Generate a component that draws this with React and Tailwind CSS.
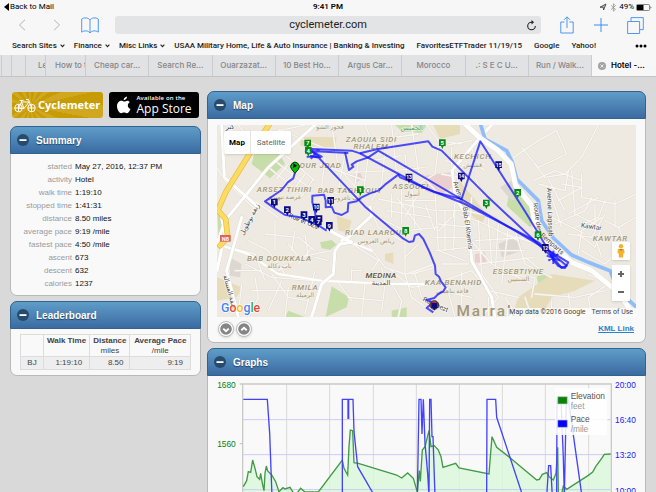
import React from "react";

function SafariChrome() {
  const tabs = ["Cheap car...", "Search Re...", "Ouarzazat...", "10 Best Ho...", "Argus Car...", "Morocco", ".: S E C U...", "Run / Walk..."];
  const divider = "shrink-0 border-r border-[#cbccce]";
  return (
    <header className="bg-[#f7f7f7] font-['Inter','Roboto',sans-serif] text-[8px] text-[#222]">
      <div className="grid h-[14px] grid-cols-3 items-center px-1 font-['Roboto',sans-serif] leading-[12px] text-black">
        <button className="flex items-center gap-[1px] text-left">
          <svg width="5" height="8" viewBox="0 0 5 8"><path d="M5 0v8L0 4z" /></svg>
          Back to Mail
        </button>
        <div className="text-center font-semibold">9:41 PM</div>
        <div className="flex items-center justify-end gap-[2px]">
          <svg width="9" height="8" viewBox="0 0 9 8"><path d="M1 4.200 7 1 4.600 7 4.200 4.300z" fill="#333" fillOpacity=".3" stroke="#333" strokeWidth=".8" /></svg>
          <svg width="7" height="9" viewBox="0 0 7 9"><path d="m1 2.400 4.500 4L3.400 8.200V.8l2.100 1.800-4.500 4" fill="none" stroke="#888" strokeWidth=".7" /></svg>
          <span>49%</span>
          <svg width="16" height="7" viewBox="0 0 16 7"><rect x=".5" y=".5" width="13" height="6" rx="1" fill="none" stroke="#555" strokeWidth=".7" /><path d="M1 1h6.500v5H1z" /><path d="M14.500 2v3l1-1.500z" fill="#555" /></svg>
        </div>
      </div>
      <div className="flex h-[22px] items-center pr-3 pl-[18px] text-[#3b8df5]">
        <button aria-label="Back" className="mr-[27px]">
          <svg width="8" height="12" viewBox="0 0 8 12" fill="none" stroke="#b4b4b6"><path d="M7 .8 1.500 6 7 11.200" /></svg>
        </button>
        <button aria-label="Forward" className="mr-[20px]">
          <svg width="8" height="12" viewBox="0 0 8 12" fill="none" stroke="#b4b4b6"><path d="M1 .8 6.500 6 1 11.200" /></svg>
        </button>
        <button aria-label="Bookmarks" className="mr-[16px]">
          <svg width="18" height="17" viewBox="0 0 18 17" fill="none" stroke="currentColor" strokeWidth=".9"><path d="M9 3C7.500.6 3 .3.700 2v13.200C3 13.200 7.500 13.500 9 16c1.500-2.500 6-2.800 8.300-.8V2C15 .3 10.500.6 9 3v13" /></svg>
        </button>
        <div className="flex h-[18px] flex-1 items-center rounded-[3px] bg-[#e3e4e6] pr-[5px] pl-[14px] text-[#222]">
          <input aria-label="Address" defaultValue="cyclemeter.com" className="w-full min-w-0 flex-1 bg-transparent text-center font-['Roboto',sans-serif] text-[11px] leading-[18px] outline-none" />
          <button aria-label="Reload">
            <svg width="9" height="11" viewBox="0 0 9 11" fill="none" stroke="#222" strokeWidth="1.100"><path d="M8.300 6A3.800 3.800 0 1 1 4.500 2.200H6" /><path d="M4.500 0 7 2.200 4.500 4.400z" fill="#222" stroke="none" /></svg>
          </button>
        </div>
        <button aria-label="Share" className="ml-[19px]">
          <svg width="14" height="18" viewBox="0 0 14 18" fill="none" stroke="currentColor" strokeWidth=".9"><path d="M4.500 6H.8v11h12.400V6H9.500M7 12V1M4 3.800 7 .8l3 3" /></svg>
        </button>
        <button aria-label="New tab" className="ml-[20px]">
          <svg width="14" height="14" viewBox="0 0 14 14" fill="none" stroke="currentColor"><path d="M7 0v14M0 7h14" /></svg>
        </button>
        <button aria-label="Show tabs" className="ml-[19px]">
          <svg width="17" height="17" viewBox="0 0 17 17" fill="none" stroke="currentColor" strokeWidth=".9"><path d="M.6 4.500h12v12h-12zM4 4.500V.6h12.300v12H12.600" /></svg>
        </button>
      </div>
      <nav className="flex h-[19px] items-center gap-[9px] pr-[9px] pl-[12px] font-['Roboto',sans-serif] leading-[12px] font-medium whitespace-nowrap">
        {["Search Sites", "Finance", "Misc Links"].map((t) => (
          <button key={t} className="flex items-center gap-[3px]">
            {t}
            <svg width="5" height="4" viewBox="0 0 5 4" fill="none" stroke="#222" strokeWidth="1.100"><path d="m.6.7 1.900 2L4.400.7" /></svg>
          </button>
        ))}
        <a href="#usaa">USAA Military Home, Life &amp; Auto Insurance | Banking &amp; Investing</a>
        <a href="#etf" className="ml-[3px]">FavoritesETFTrader 11/19/15</a>
        <a href="#google" className="ml-[3px]">Google</a>
        <a href="#yahoo" className="ml-[3px]">Yahoo!</a>
        <button aria-label="More bookmarks" className="ml-auto">
          <svg width="12" height="4" viewBox="0 0 12 4"><circle cx="2" cy="2" r="1.500" /><circle cx="6" cy="2" r="1.500" /><circle cx="10" cy="2" r="1.500" /></svg>
        </button>
      </nav>
      <div className="flex h-[22px] border-b border-[#c3c4c6] bg-[#e1e2e4] leading-[21px] font-medium whitespace-nowrap text-[#858688]">
        <div className={"w-[2px] " + divider} />
        <div className={"w-[10px] " + divider} />
        <div className={"w-[14px] " + divider} />
        <button className={"w-[20px] overflow-hidden pl-[12px] text-left " + divider}>Le</button>
        <button className={"w-[40px] overflow-hidden pl-[9px] text-left " + divider}>How to t</button>
        {tabs.map((t) => (
          <button key={t} className="min-w-0 flex-1 overflow-hidden border-r border-[#cbccce] text-center">{t}</button>
        ))}
        <button className="flex w-[64px] shrink-0 items-center gap-[5px] bg-[#f7f7f7] pl-[6px] font-semibold text-black">
          <svg width="8" height="8" viewBox="0 0 8 8"><circle cx="4" cy="4" r="4" fill="#a3a3a5" /><path d="m2.500 2.500 3 3m0-3-3 3" stroke="#fff" strokeWidth=".8" /></svg>
          Hotel -...
        </button>
      </div>
    </header>
  );
}

function Card({ title, children }) {
  return (
    <section className="rounded-[7px] border border-[#b9b9b9] bg-[#f9f9f9]">
      <h2 className="-mx-px -mt-px flex h-[28px] items-center gap-[7px] rounded-t-[7px] border border-[#2f6390] bg-linear-to-b from-[#5f9dc9] to-[#3b6ba1] pl-[6px] text-[10px] font-bold text-white text-shadow-[0_1px_1px_#1d4468]">
        <button aria-label={"Collapse " + title}>
          <svg width="12" height="12" viewBox="0 0 12 12"><circle cx="6" cy="6" r="6" fill="#264b6c" /><path d="M2.500 5.200h7v1.800h-7z" fill="#fff" /></svg>
        </button>
        {title}
      </h2>
      {children}
    </section>
  );
}

const stats = [
  ["started", "May 27, 2016, 12:37 PM"], ["activity", "Hotel"], ["walk time", "1:19:10"], ["stopped time", "1:41:31"],
  ["distance", "8.50 miles"], ["average pace", "9:19 /mile"], ["fastest pace", "4:50 /mile"], ["ascent", "673"], ["descent", "632"], ["calories", "1237"],
];

function Logos() {
  return (
    <div className="mt-px mb-2 grid grid-cols-2 gap-[6px] px-[2px]">
      <a href="#cyclemeter" className="flex h-[26px] min-w-0 items-center gap-[2px] rounded-[3px] bg-[repeating-conic-gradient(from_5deg_at_20%_55%,#c79b04_0_12deg,#d0a820_12deg_24deg)] pl-[2px] font-['Open_Sans','Noto_Sans',sans-serif] text-[11px] font-bold text-white">
        <svg className="shrink-0" width="22" height="15" viewBox="0 0 44 30" fill="none" stroke="#fff" strokeWidth="2">
          <circle cx="9" cy="20" r="7.500" /><circle cx="35" cy="20" r="7.500" />
          <path d="M9 20 15 8h15L20 21H9m6-13 5 13M35 20 29 3h-5M11 5h8m-4 0v3M9 13v14m-7-7h14m19-7v14m-7-7h14" />
        </svg>
        Cyclemeter
      </a>
      <a href="#appstore" className="flex h-[26px] min-w-0 items-center gap-[6px] rounded-[3px] bg-black pl-[8px] font-['Open_Sans','Noto_Sans',sans-serif] text-white">
        <svg className="shrink-0" width="14" height="18" viewBox="0 0 28 34" fill="#fff"><path d="M20 0c.3 4-3.300 7.500-6.600 7.300C13 3.700 16.600.3 20 0zM25.500 11.500c-6 4-4.500 11 1.500 13.500-2 5-4.500 8.500-7.500 8.500-2 0-3-1.300-5.500-1.300S10.500 33.500 8.500 33.500C4 33.500 0 25 0 19.500c0-7 4.500-11 9-11 2.500 0 4 1.500 5.500 1.500s3.500-1.700 6.500-1.700c1.800 0 3.500 1.200 4.500 3.200z" /></svg>
        <span className="flex flex-col whitespace-nowrap">
          <span className="text-[6px] leading-[7px] font-semibold tracking-wide">Available on the</span>
          <span className="text-[12px] leading-[13px] font-medium">App Store</span>
        </span>
      </a>
    </div>
  );
}

const minorRoads = [
  "M50 123 60 290 150 375M60 290 36 250M100 123 130 160 300 123M220 135 400 210M380 123 400 250 470 330",
  "M480 123 500 170 640 150M560 123 575 270M620 123 640 260 700 330M700 190 690 270 640 300 700 330",
  "M190 250 290 330M210 230 310 310M230 205 330 290M250 240 215 285M275 255 235 305M300 270 260 325M325 285 285 345M140 345 220 400",
  "M345 240 480 290M360 220 350 310 400 330M420 210 400 320M460 230 450 300M490 215 475 330M430 265 560 260M500 230 590 215",
  "M540 200 530 300 500 350M570 260 660 250M600 210 610 330M560 330 560 400M590 310 590 420M620 300 630 430M520 345 690 380",
  "M600 350 690 350M545 380 680 400M575 340 650 440M640 330 600 400M660 360 690 440M520 400 600 440 700 430",
  "M500 385 520 430 590 470M480 470 540 550 600 570M435 475 520 530 500 560M600 470 600 570M640 480 600 520M605 570 690 540",
  "M130 470 190 500 240 570M75 490 150 510 180 590M120 540 200 580 330 590M200 570 250 640 310 650M220 560 280 520 380 500",
  "M230 590 190 680M250 610 240 699M150 580 160 640 130 699M110 600 100 690M280 540 320 490M250 480 290 530M90 560 170 560",
  "M180 450 280 460 330 500M270 440 260 500M300 450 310 520M210 410 210 500M330 520 370 530M330 560 300 690M140 620 260 620",
  "M395 590 440 650M440 555 440 596M470 560 440 560M530 550 540 600 530 680M560 600 590 650 580 699",
  "M600 570 620 640 690 690M560 560 620 610 690 600M480 600 470 699M430 640 530 650M630 570 650 640M690 550 620 570",
  "M710 270 760 280 745 400M720 230 800 250M690 320 700 500 780 530M740 400 700 440M760 390 840 420 940 470M800 340 790 500",
  "M700 380 790 380M700 420 800 430M690 460 790 460M720 380 720 500M750 380 745 500M690 500 790 490M710 540 790 540",
  "M780 450 860 540 980 600M820 410 830 570M850 400 860 540M880 420 870 570M910 430 890 600M800 500 960 500M820 540 990 520",
  "M810 470 970 460M930 440 960 540 1040 580M890 570 990 580 980 640M960 520 1010 560M780 380 870 400M900 450 1000 480",
  "M690 600 800 560 850 620 940 640M830 570 880 640 830 699M700 620 800 640M720 590 750 699M770 560 770 660M900 640 940 699",
  "M925 220 1000 170 1055 140 1085 210 1000 250 950 190M990 240 1020 280 1080 270 1130 220 1180 123",
  "M985 290 1050 260 1130 290M1000 300 1080 320 1090 260M1030 285 1080 380M1060 350 1130 310 1070 300M1100 260 1110 390",
  "M1130 270 1130 340 1230 360 1293 330M1110 390 1190 430 1170 490 1120 450M1090 390 1180 340M1040 400 1140 450M1070 430 1040 340",
  "M1050 420 1140 380 1160 340M1200 350 1180 400 1110 430M1170 430 1170 360M1090 450 1160 460 1200 390",
  "M1120 510 1130 440 1190 400M1130 500 1200 540 1260 480 1240 430 1200 410M1190 520 1170 460M1230 430 1230 350M1293 400 1240 430",
  "M1150 570 1210 600 1150 640 1160 699M990 630 1110 640 1200 620M1040 650 1040 699M1090 630 1100 699M960 640 980 699M850 640 850 699",
  "M665 123 700 170 770 180M690 190 800 170M800 180 810 240 840 260M740 190 740 250 790 300M770 250 840 240M810 280 830 330",
];
const majorRoads = [
  "M50 123 58 280 160 370M330 123 190 250 60 410 36 480M36 560 60 450 50 400M110 400 65 560 100 699",
  "M365 435 440 475 405 480 390 500 385 570 350 600 320 699M410 470 430 460 500 395 495 370",
  "M742 260 750 340 790 400 800 530 860 640 870 699M740 260 826 160 860 123",
  "M240 393 365 435 440 475",
];
const midRoads = ["M350 590 560 600 690 600M36 480 130 510 220 570 350 590M440 475 500 500"];
const highway = "M195 118 130 215 62 325 40 375 36 380M30 370 62 405 68 460 45 485";
const river = "M825 115 840 165 905 200 922 235 935 285 1000 350 1010 410 1045 462 1100 513 1150 535 1215 560 1240 620 1300 675";
const boulevard = "M770 110 826 163 880 200 918 240 932 305 980 365 995 450 1050 490 1100 535 1160 560 1240 625 1290 699";

const routes = [
  "M270 265 265 283 248 295 230 318 208 333 180 352 205 370 240 393 285 400 340 424 365 440M335 420 330 385 322 355 322 335 357 332 362 350 362 370 380 368 388 386 410 393 428 383 430 357 455 352 470 340 495 328 520 320 540 302 580 272 585 280 615 292 690 325 770 345 826 172 965 390 1045 523",
  "M300 205 320 195 440 200 465 208 515 196 670 172 682 188 710 200 845 335 1045 523",
  "M315 215 345 222 320 200 335 215 480 368 595 464 612 474 625 472 630 454 642 450 655 465 674 505 690 545 692 570 702 578 708 592 722 610 715 622 700 630 688 642 665 648 684 655 665 672 685 685",
  "M420 205 432 258 445 248 440 242 455 232 490 220 520 200 845 390 1015 490 1090 535 1080 552 1060 546 1040 522",
  "M465 208 660 312 780 360 1000 475 1085 545 1070 552 1035 510",
  "M305 200 430 207M310 195 350 218 305 218M340 196 318 225M305 208 345 200M1045 500 1045 540M1025 515 1065 530M1030 530 1060 510",
];
const greenPins = [[308, 178, "7"], [310, 200, "4"], [466, 318, "1"], [712, 177, "5"], [938, 326, "2"], [844, 358, "3"], [999, 453, "6"], [602, 440, "8"]];
const navyPins = [[208, 355, "1"], [247, 378, "2"], [297, 393, "3"], [320, 407, "4"], [342, 405, "5"], [340, 415, "7"], [373, 425, "9"], [334, 370, "10"], [377, 350, "11"], [612, 280, "13"], [769, 277, "14"], [881, 243, "15"], [1021, 491, "12"]];
const districts = [
  [499, 174, "ZAOUIA SIDI"], [498, 196, "RHALEM"], [338, 252, "DOUR JDAD"], [238, 323, "ARSET TIHIRI"], [435, 327, "BAB TAGHZOUT"],
  [620, 314, "ASSOUEL"], [803, 226, "KECHICH"], [513, 453, "RIAD LAAROUS"], [223, 530, "BAB DOUKKALA"], [300, 618, "RMILA"],
  [745, 602, "KAA BENAHID"], [940, 569, "ESSEBTIYNE"], [1216, 471, "KAWTAR"],
];
const arabic = [[375, 134, "فحور الشو"], [238, 346, "عرصة تيهيري"], [425, 349, "باب تاغزوت"], [622, 337, "أسول"], [803, 249, "قشيش"], [513, 477, "رياض العروس"], [223, 551, "باب دكالة"], [300, 640, "الرميلة"], [742, 626, "قاعة بناهيض"], [940, 592, "السبتيين"]];

function Pin({ x, y, label, color }) {
  return (
    <g>
      <path d={`M${x - 10} ${y - 11}h20v20h-6l-4 9-4-9h-6z`} fill={color} />
      <text x={x} y={y + 6} textAnchor="middle" fontSize={label.length > 1 ? 15 : 18} fontWeight="700" fill="#fff">{label}</text>
    </g>
  );
}

function CityMap() {
  return (
    <svg className="block h-full w-full font-['Roboto','DejaVu_Sans',sans-serif]" viewBox="36 123 1257 576" preserveAspectRatio="xMidYMid slice">
      <path d="M36 123h1257v576H36z" fill="#eeeae1" />
      <g fill="#c8deaa">
        <path d="M150 200 225 210 240 240 195 283 140 240zM36 370 60 420 40 450zM380 607 432 640 425 670 362 699zM345 475 380 468 395 482 375 497 350 493zM570 123 665 123 650 147 590 142zM910 340 950 325 1000 405 975 430 905 365zM995 577 1030 570 1032 590 1000 600zM560 680 605 670 605 699 560 699zM250 680 300 699 240 699z" />
      </g>
      <g fill="#e6dcba">
        <path d="M290 158 395 160 390 190 285 185zM685 123 765 123 765 150 705 165zM755 280 845 390 830 420 760 360zM395 395 440 410 430 445 400 440zM36 580 110 610 95 640 36 650zM940 640 1040 570 1170 590 1110 620 1040 640 1010 699 920 699zM540 510 565 505 565 540 540 530z" />
      </g>
      <path d="M660 275 735 265 745 310 700 335 660 320zM440 275 465 265 475 285 455 293zM810 510 840 505 845 540 810 535z" fill="#ebcfce" />
      <path d="M885 310 930 285 950 330 920 350zM75 520 110 540 105 580 75 575zM880 480 940 450 950 500 890 520z" fill="#dcd8d1" />
      <g fill="none" strokeLinejoin="round" strokeLinecap="round">
        <g stroke="#e2ddd3" strokeWidth="7">{minorRoads.map((d) => <path key={d} d={d} />)}</g>
        <g stroke="#f9f7f3" strokeWidth="4">{minorRoads.map((d) => <path key={d} d={d} />)}</g>
        <g stroke="#fff" strokeWidth="6">{midRoads.map((d) => <path key={d} d={d} />)}</g>
        <g stroke="#dcd7cd" strokeWidth="11">{majorRoads.map((d) => <path key={d} d={d} />)}</g>
        <g stroke="#fff" strokeWidth="9">{majorRoads.map((d) => <path key={d} d={d} />)}</g>
        <path d={highway} stroke="#e9b840" strokeWidth="17" />
        <path d={highway} stroke="#fbdc63" strokeWidth="13" />
        <path d={river} stroke="#8fbcfa" strokeWidth="11" />
        <path d={boulevard} stroke="#dcd8ce" strokeWidth="17" />
        <path d={boulevard} stroke="#fff" strokeWidth="15" />
      </g>
      <g textAnchor="middle" fill="#a1967a" stroke="#f5f2ea" strokeWidth="3" paintOrder="stroke">
        {districts.map(([x, y, t]) => <text key={t} x={x} y={y} fontSize="24" fontWeight="500" fontStyle="italic" className="tracking-[2px]">{t}</text>)}
        {arabic.map(([x, y, t]) => <text key={t} x={x} y={y} fontSize="19">{t}</text>)}
        <text x="528" y="581" fontSize="24" fontWeight="500" fontStyle="italic" fill="#5d5442" className="tracking-[1px]">MEDINA</text>
        <text x="528" y="602" fontSize="20" fill="#5d5442">المدينة</text>
        <text x="620" y="137" fontSize="20" fill="#5c9b50">الخميس</text>
        <text x="845" y="697" fontSize="46" fontWeight="500" className="tracking-[6px]">Marrak</text>
      </g>
      <g fill="#444" fontSize="20" stroke="#fff" strokeWidth="3" paintOrder="stroke">
        <text transform="translate(745 295) rotate(72)">Avenue</text>
        <text transform="translate(773 370) rotate(82)">Bab El Khemis</text>
        <text transform="translate(985 358) rotate(82)">Route des</text>
        <text transform="translate(1005 455) rotate(42)">Remparts</text>
        <text transform="translate(1026 312) rotate(88)">Avenue Lagssab</text>
        <text transform="translate(1127 430) rotate(8)">Kawtar</text>
        <text transform="translate(250 400) rotate(22)">Rue el Gza</text>
        <text transform="translate(652 650) rotate(25)">Rue lbezt</text>
        <text transform="translate(115 455) rotate(-62)">زنقة بوطويل</text>
        <text transform="translate(55 575) rotate(75)">زنقة العسالة</text>
        <text x="62" y="136">كتر</text>
      </g>
      <path d="M45 453h32v20H45z" fill="#df625b" />
      <text x="61" y="470" fontSize="17" fontWeight="700" textAnchor="middle" fill="#fff">N8</text>
      <g fill="none" stroke="#1212ff" strokeOpacity=".74" strokeWidth="6" strokeLinejoin="round">
        {routes.map((d) => <path key={d} d={d} />)}
      </g>
      {navyPins.map(([x, y, t]) => <Pin key={t} x={x} y={y} label={t} color="#0b0b82" />)}
      {greenPins.map(([x, y, t]) => <Pin key={t} x={x} y={y} label={t} color="#088a10" />)}
      <path d="M270 268 260 256a13 13 0 1 1 20 0z" fill="#0ab80f" stroke="#033c04" strokeWidth="3" />
      <path d="m265 238 11 7-11 7z" />
      <circle cx="688" cy="663" r="13" fill="#e0372e" stroke="#333" strokeWidth="3" />
      <path d="M679 656h18v16h-5l-4 8-4-8h-5z" fill="#0b0b82" />
      <g fontSize="37" fontWeight="500" stroke="#fff" strokeWidth="4" paintOrder="stroke">
        <text x="48" y="684"><tspan fill="#4285f4">G</tspan><tspan fill="#ea4335">o</tspan><tspan fill="#fbbc05">o</tspan><tspan fill="#4285f4">g</tspan><tspan fill="#34a853">l</tspan><tspan fill="#ea4335">e</tspan></text>
      </g>
    </svg>
  );
}

function MapPanel() {
  return (
    <Card title="Map">
      <div className="px-[9px] pt-[6px]">
        <div className="relative h-[192px] overflow-hidden font-['Roboto',sans-serif] text-[8px]">
          <CityMap />
          <div className="absolute top-[6px] left-[7px] flex h-[23px] rounded-[2px] bg-white shadow-sm">
            <button className="w-[27px] border-r border-[#e3e3e3] font-bold text-black">Map</button>
            <button className="w-[40px] text-[#666]">Satellite</button>
          </div>
          <button aria-label="Street View" className="absolute right-[6px] bottom-[57px] flex h-[18px] w-[18px] items-center justify-center rounded-[1px] bg-white shadow-sm">
            <svg width="8" height="14" viewBox="0 0 8 14" fill="#f3b12c"><circle cx="4" cy="2.300" r="2.200" /><path d="M1 5h6l.6 4-1.200.6L6 13.500H2L1.600 9.600.4 9z" /><path d="M2 5h4L4 7z" fill="#c57c15" /></svg>
          </button>
          <div className="absolute right-[6px] bottom-[16px] flex w-[18px] flex-col rounded-[1px] bg-white shadow-sm">
            <button aria-label="Zoom in" className="flex h-[18px] items-center justify-center"><svg width="8" height="8" viewBox="0 0 8 8"><path d="M3 1h2v2h2v2H5v2H3V5H1V3h2z" fill="#666" /></svg></button>
            <button aria-label="Zoom out" className="flex h-[18px] items-center justify-center"><svg width="8" height="8" viewBox="0 0 8 8"><path d="M1 3h6v2H1z" fill="#666" /></svg></button>
          </div>
          <div className="absolute right-0 bottom-0 flex h-[9px] items-center gap-[6px] bg-white/75 pr-[3px] pl-[2px] text-[7px] leading-[9px] text-[#444]">
            <span>Map data ©2016 Google</span>
            <a href="#terms">Terms of Use</a>
          </div>
        </div>
        <div className="flex h-[25px] items-center gap-[2px] pb-[2px]">
          {["m3.800 6.500 3.200 3 3.200-3", "m3.800 8.500 3.200-3 3.200 3"].map((d, i) => (
            <button key={d} aria-label={i ? "Collapse map" : "Expand map"} className="flex h-4 w-4 items-center justify-center rounded-full border border-[#bbb] bg-white shadow-sm first:ml-[1px]">
              <svg width="12" height="12" viewBox="0 0 14 14"><circle cx="7" cy="7" r="6.800" fill="#858585" /><path d={d} fill="none" stroke="#fff" strokeWidth="2.200" /></svg>
            </button>
          ))}
          <a href="#kml" className="mr-[2px] ml-auto text-[8px] font-bold text-[#2b82c9] underline">KML Link</a>
        </div>
      </div>
    </Card>
  );
}

const elevation = "115,440 125,422 130,395 137,397 143,360 150,385 156,410 164,418 167,400 172,430 177,452 180,400 184,378 188,393 200,405 212,425 222,455 234,443 240,447 255,442 265,458 277,458 287,445 300,456 340,456 412,360 417,385 428,405 432,320 436,270 443,272 447,368 460,370 575,405 590,414 608,399 625,415 637,456 643,392 646,424 652,330 660,320 672,272 678,320 688,317 700,330 708,350 714,382 752,370 762,384 852,402 856,350 861,290 875,322 915,353 995,420 1003,418 1012,403 1025,398 1032,410 1045,420 1053,400 1058,322 1060,460 1070,460 1075,438 1085,448 1150,406 1163,396 1172,380 1190,355 1198,343 1217,342";
const pace = "M115 178H187L194 280 201 470M412 470V178H429V235H431V178H444L447 275 458 380 510 470M637 470 642 178 648 178 651 282 655 178 660 310 668 400 672 470 674 178 678 178 681 290 684 290 690 470M845 470 846 178H872L875 232 954 470M1025 470 1031 377H1037L1042 470M1055 470 1056 178M1068 178 1075 355 1078 470 1084 178M1090 178 1131 470";

function Chart() {
  return (
    <svg className="block h-auto w-full font-['Liberation_Sans',Arial,sans-serif]" viewBox="9 108 1311 426" role="img" aria-label="Elevation and pace">
      <path d="M245 132v400M374 132v400M505 132v400M634 132v400M763 132v400M892 132v400M1021 132v400M1151 132v400" stroke="#d9d9d9" strokeWidth="3" />
      <path d={"M" + elevation + " 1217,534 115,534z"} fill="#d9f8d8" fillOpacity=".8" />
      <path d="M115 239H1217M115 344H1217M115 449H1217" stroke="#cbcbf7" strokeWidth="3" />
      <path d="M113 534V132H1219V534M104 132h9M104 311h9" fill="none" stroke="#c9c9c9" strokeWidth="4" />
      <polyline points={elevation} fill="none" stroke="#419a44" strokeWidth="4" />
      <path d={pace} fill="none" stroke="#4343ff" strokeWidth="4" />
      <path d="M1050 145h157v140h-157z" fill="#fff" fillOpacity=".86" />
      <path d="M1058 170h29v22h-29z" fill="#078207" stroke="#ccc" strokeWidth="2" />
      <path d="M1058 240h29v22h-29z" fill="#0202ff" stroke="#ccc" strokeWidth="2" />
      <g fontSize="25" fill="#555">
        <text x="1097" y="176">Elevation</text><text x="1097" y="206" fill="#999">feet</text>
        <text x="1097" y="245">Pace</text><text x="1097" y="276" fill="#999">/mile</text>
      </g>
      <g fontSize="25" fill="#078207" textAnchor="end"><text x="92" y="144">1680</text><text x="92" y="320">1560</text></g>
      <g fontSize="25" fill="#2020ff"><text x="1230" y="144">20:00</text><text x="1230" y="250">16:40</text><text x="1230" y="355">13:20</text><text x="1230" y="461">10:00</text></g>
    </svg>
  );
}

export default function App() {
  const cell = "border border-[#dcdcdc] px-[3px] py-0";
  return (
    <div className="flex h-screen flex-col overflow-hidden bg-[#d9d9d9]">
      <SafariChrome />
      <main className="grid grid-cols-[191px_minmax(0,1fr)] items-start gap-[6px] px-[10px] pt-[14px] font-['Liberation_Sans',Arial,sans-serif] text-[8px]">
        <div className="flex flex-col">
          <Logos />
          <Card title="Summary">
            <dl className="grid grid-cols-[61px_1fr] gap-x-[3px] pt-[6px] pb-[5px] leading-[13px]">
              {stats.map(([k, v]) => (
                <React.Fragment key={k}>
                  <dt className="text-right text-[#999]">{k}</dt>
                  <dd className="text-[#111]">{v}</dd>
                </React.Fragment>
              ))}
            </dl>
          </Card>
          <div className="h-[5px]" />
          <Card title="Leaderboard">
            <div className="px-[9px] py-[5px]">
              <table className="w-full border-collapse leading-[10px] text-[#444]">
                <thead>
                  <tr>
                    <th className={cell + " w-[23px]"}><span className="sr-only">Name</span></th>
                    <th className={cell + " w-[46px] pt-px align-top whitespace-nowrap"}>Walk Time</th>
                    <th className={cell + " w-[40px] pt-px align-top"}>Distance<br /><span className="font-normal">miles</span></th>
                    <th className={cell + " pt-px align-top whitespace-nowrap"}>Average Pace<br /><span className="font-normal">/mile</span></th>
                  </tr>
                </thead>
                <tbody>
                  <tr className="bg-[#eeeeee] text-right leading-[12px]">
                    <td className={cell + " text-center"}>BJ</td>
                    <td className={cell}><span className="pr-[4px]">1:19:10</span></td>
                    <td className={cell}><span className="pr-[3px]">8.50</span></td>
                    <td className={cell}><span className="pr-[4px]">9:19</span></td>
                  </tr>
                </tbody>
              </table>
            </div>
          </Card>
        </div>
        <div className="flex flex-col gap-[5px]">
          <MapPanel />
          <Card title="Graphs"><Chart /></Card>
        </div>
      </main>
    </div>
  );
}
